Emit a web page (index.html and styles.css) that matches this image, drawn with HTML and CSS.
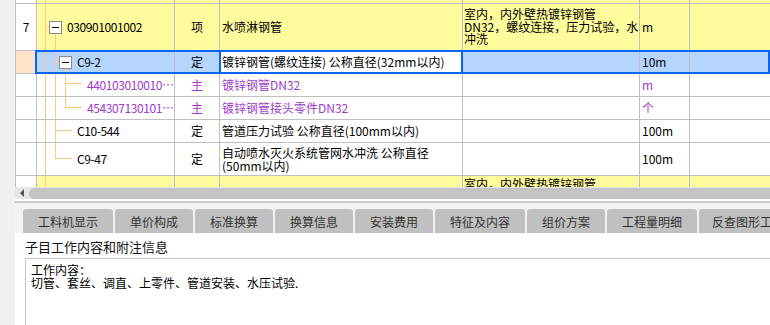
FILE: index.html
```html
<!DOCTYPE html>
<html lang="zh-CN">
<head>
<meta charset="utf-8">
<title>子目</title>
<link rel="stylesheet" href="styles.css">
</head>
<body>
<div class="app">
  <div class="side"></div>
  <div class="main">
    <div class="grid">
      <div class="row r0">
        <div class="c num"></div>
        <div class="c code y t-full"></div>
        <div class="c y"></div>
        <div class="c y"></div>
        <div class="c y"></div>
        <div class="c y"></div>
        <div class="c y"></div>
      </div>
      <div class="row r7">
        <div class="c num">7</div>
        <div class="c code y t-r7"><span class="tb"></span>030901001002</div>
        <div class="c type y">项</div>
        <div class="c name y">水喷淋钢管</div>
        <div class="c feat y">室内，内外壁热镀锌钢管<br>DN32，螺纹连接，压力试验，水<br>冲洗</div>
        <div class="c unit y">m</div>
        <div class="c y"></div>
      </div>
      <div class="row rs">
        <div class="c num peach"></div>
        <div class="c code sel t-sel"><span class="tb"></span>C9-2</div>
        <div class="c type sel">定</div>
        <div class="c name act">镀锌钢管(螺纹连接) 公称直径(32mm以内)</div>
        <div class="c feat sel"></div>
        <div class="c unit sel">10m</div>
        <div class="c sel"></div>
      </div>
      <div class="row rm">
        <div class="c num"></div>
        <div class="c code main-item t-m1">440103010010…</div>
        <div class="c type pu">主</div>
        <div class="c name pu">镀锌钢管DN32</div>
        <div class="c feat"></div>
        <div class="c unit pu">m</div>
        <div class="c"></div>
      </div>
      <div class="row rm">
        <div class="c num"></div>
        <div class="c code main-item t-m2">454307130101…</div>
        <div class="c type pu">主</div>
        <div class="c name pu">镀锌钢管接头零件DN32</div>
        <div class="c feat"></div>
        <div class="c unit pu">个</div>
        <div class="c"></div>
      </div>
      <div class="row rd">
        <div class="c num"></div>
        <div class="c code sub t-d1">C10-544</div>
        <div class="c type">定</div>
        <div class="c name">管道压力试验 公称直径(100mm以内)</div>
        <div class="c feat"></div>
        <div class="c unit">100m</div>
        <div class="c"></div>
      </div>
      <div class="row r947">
        <div class="c num"></div>
        <div class="c code sub t-d2">C9-47</div>
        <div class="c type">定</div>
        <div class="c name multi">自动喷水灭火系统管网水冲洗 公称直径<br>(50mm以内)</div>
        <div class="c feat"></div>
        <div class="c unit">100m</div>
        <div class="c"></div>
      </div>
      <div class="row rl">
        <div class="c num"></div>
        <div class="c code y t-full"></div>
        <div class="c y"></div>
        <div class="c y"></div>
        <div class="c feat y top">室内，内外壁热镀锌钢管</div>
        <div class="c y"></div>
        <div class="c y"></div>
      </div>
    </div>
    <div class="hs"><span class="arrow"></span><span class="thumb"></span></div>
    <div class="tabbar">
      <div class="tab w90">工料机显示</div>
      <div class="tab w78">单价构成</div>
      <div class="tab w78">标准换算</div>
      <div class="tab w78">换算信息</div>
      <div class="tab w78">安装费用</div>
      <div class="tab w90">特征及内容</div>
      <div class="tab w78">组价方案</div>
      <div class="tab w90">工程量明细</div>
      <div class="tab w110">反查图形工程量</div>
    </div>
    <div class="panel">
      <div class="label">子目工作内容和附注信息</div>
      <div class="box">工作内容：<br>切管、套丝、调直、上零件、管道安装、水压试验.</div>
    </div>
  </div>
</div>
</body>
</html>
```

FILE: styles.css
```css
html, body {
  margin: 0;
  padding: 0;
  width: 770px;
  height: 325px;
  overflow: hidden;
  background: #f0f0f0;
  font-family: "Noto Sans CJK SC", "Noto Sans", sans-serif;
  font-size: 12px;
  color: #000;
}

.app {
  display: flex;
  height: 325px;
}

.side {
  width: 15px;
  flex: none;
  background: #f0f0f0;
}

.main {
  flex: 1;
  min-width: 0;
  display: flex;
  flex-direction: column;
  overflow: hidden;
}

/* ---------- grid ---------- */
.grid {
  height: 187px;
  overflow: hidden;
  background: #fff;
  flex: none;
}

.row {
  display: grid;
  grid-template-columns: 21px 138px 45px 243px 177px 50px 1fr;
  position: relative;
  box-sizing: border-box;
}

.r0 { height: 4px; }
.r7 { height: 47px; }
.rs, .rm, .rd { height: 23px; }
.r947 { height: 33px; }
.rl { height: 47px; }

.c {
  box-sizing: border-box;
  border-left: 1px solid #c0c0c0;
  border-bottom: 1px solid #c0c0c0;
  display: flex;
  align-items: center;
  white-space: nowrap;
  overflow: hidden;
  background-color: #fff;
  line-height: 14px;
}

.y { background-color: #fffc9d; }
.sel { background-color: #b5d5fc; }
.peach { background-color: #fde4c8; }
.pu { color: #a03cc8; }

.num { justify-content: center; }
.type { justify-content: center; }
.name { padding-left: 2px; }
.name.multi { line-height: 13px; }
.feat { padding-left: 1px; line-height: 12.5px; }
.feat.top { align-items: flex-start; padding-top: 2px; }
.unit { padding-left: 2px; }

.code { letter-spacing: -0.4px; }
.r7 .code { padding-left: 12px; }
.rs .code { padding-left: 22px; }
.code.main-item { padding-left: 50px; color: #a03cc8; }
.code.sub { padding-left: 40px; }

/* tree expander box */
.tb {
  width: 13px;
  height: 13px;
  box-sizing: border-box;
  border: 1px solid #8a8a8a;
  background: #fff;
  margin-right: 5px;
  flex: none;
  display: flex;
  align-items: center;
  justify-content: center;
}
.tb::before {
  content: "";
  width: 7px;
  height: 1px;
  background: #000;
}

/* tree connector lines */
.code {
  --t: linear-gradient(#ffc880, #ffc880);
  background-repeat: no-repeat;
}
.t-full {
  background-image: var(--t);
  background-position: 8px 0;
  background-size: 1px 100%;
}
.t-r7 {
  background-image: var(--t), var(--t), var(--t);
  background-position: 8px 0, 18px 29px, 8px 22px;
  background-size: 1px 100%, 1px 17px, 4px 1px;
}
.t-sel {
  background-image: var(--t), var(--t), var(--t), var(--t);
  background-position: 8px 0, 18px 0, 28px 17px, 18px 10px;
  background-size: 1px 100%, 1px 100%, 1px 5px, 4px 1px;
}
.t-m1 {
  background-image: var(--t), var(--t), var(--t), var(--t);
  background-position: 8px 0, 18px 0, 28px 0, 28px 9px;
  background-size: 1px 100%, 1px 100%, 1px 100%, 17px 1px;
}
.t-m2 {
  background-image: var(--t), var(--t), var(--t), var(--t);
  background-position: 8px 0, 18px 0, 28px 0, 28px 10px;
  background-size: 1px 100%, 1px 100%, 1px 11px, 17px 1px;
}
.t-d1 {
  background-image: var(--t), var(--t), var(--t);
  background-position: 8px 0, 18px 0, 18px 10px;
  background-size: 1px 100%, 1px 100%, 17px 1px;
}
.t-d2 {
  background-image: var(--t), var(--t), var(--t);
  background-position: 8px 0, 18px 0, 18px 15px;
  background-size: 1px 100%, 1px 16px, 17px 1px;
}

/* selection outlines (drawn over the row) */
.rs::after {
  content: "";
  position: absolute;
  left: 20px;
  right: 0;
  top: -1px;
  bottom: 0;
  border: 2px solid #0a64f6;
  pointer-events: none;
  z-index: 2;
}
.act {
  position: relative;
  overflow: visible;
  background-color: #fff;
}
.act::after {
  content: "";
  position: absolute;
  left: -1px;
  right: -1px;
  top: -1px;
  bottom: -1px;
  border: 2px solid #0a64f6;
  pointer-events: none;
  z-index: 3;
}

/* ---------- horizontal scrollbar ---------- */
.hs {
  height: 12px;
  flex: none;
  display: flex;
  align-items: center;
  background: #e6e6e6;
  border-bottom: 2px solid #fff;
}
.arrow {
  width: 0;
  height: 0;
  border-top: 4px solid transparent;
  border-bottom: 4px solid transparent;
  border-right: 4px solid #555;
  margin-left: 5px;
  margin-right: 5px;
  flex: none;
}
.thumb {
  flex: 1;
  height: 11px;
  background: #c4c4c4;
  border-radius: 6px 0 0 6px;
}

/* ---------- tabs ---------- */
.tabbar {
  flex: none;
  display: flex;
  gap: 2px;
  border-top: 2px solid #cdcdcd;
  padding: 6px 0 0 8px;
  background: #f3f3f3;
}
.tab {
  height: 24px;
  flex: none;
  display: flex;
  align-items: center;
  justify-content: center;
  background: #c0c0c0;
  border-radius: 3px 3px 0 0;
  color: #333;
  font-size: 12px;
  white-space: nowrap;
  overflow: hidden;
}
.w90 { width: 90px; }
.w78 { width: 78px; }
.w110 { width: 110px; }

/* ---------- bottom panel ---------- */
.panel {
  flex: 1;
  background: #fff;
  padding: 5px 0 0 10px;
}
.label {
  font-size: 13px;
  line-height: 18px;
  color: #111;
}
.box {
  margin-top: 2px;
  border: 1px solid #c8c8c8;
  border-right: none;
  height: 80px;
  padding: 4px 5px;
  font-size: 12px;
  line-height: 13px;
}
```
